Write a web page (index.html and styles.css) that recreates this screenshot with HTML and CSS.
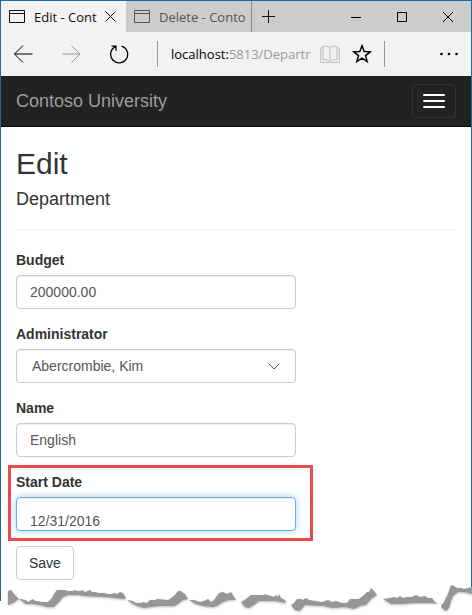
FILE: index.html
```html
<!DOCTYPE html>
<html lang="en">
<head>
<meta charset="utf-8">
<title>Edit - Contoso University</title>
<link rel="stylesheet" href="styles.css">
</head>
<body>
<div class="window">
  <header class="tabs">
    <div class="tab tab-active">
      <svg class="page-icon" width="16" height="13" viewBox="0 0 16 13"><path d="M.5.5h15v12H.5zM0 3.500h16"/></svg>
      <span class="tab-title">Edit - Cont</span>
      <button class="tab-close" aria-label="Close tab"><svg width="11" height="11" viewBox="0 0 11 11"><path d="M.5.5l10 10M10.500.5l-10 10"/></svg></button>
    </div>
    <div class="tab tab-idle">
      <svg class="page-icon" width="16" height="13" viewBox="0 0 16 13"><path d="M.5.5h15v12H.5zM0 3.500h16"/></svg>
      <span class="tab-title">Delete - Conto</span>
    </div>
    <button class="tab-new" aria-label="New tab"><svg width="13" height="13" viewBox="0 0 13 13"><path d="M6.500 0v13M0 6.500h13"/></svg></button>
    <div class="controls">
      <button aria-label="Minimize"><svg width="10" height="10" viewBox="0 0 10 10"><path d="M0 5.500h10"/></svg></button>
      <button aria-label="Maximize"><svg width="10" height="10" viewBox="0 0 10 10"><path d="M.5.5h9v9h-9z"/></svg></button>
      <button aria-label="Close"><svg width="10" height="10" viewBox="0 0 10 10"><path d="M0 0l10 10M10 0L0 10"/></svg></button>
    </div>
  </header>
  <nav class="toolbar">
    <button class="tool" aria-label="Back"><svg width="20" height="18" viewBox="0 0 20 18"><path d="M19.500 9H1.500M10 .5L1.500 9l8.500 8.500"/></svg></button>
    <button class="tool tool-off" aria-label="Forward"><svg width="20" height="18" viewBox="0 0 20 18"><path d="M1 9h18M10.500.5L19 9l-8.500 8.500"/></svg></button>
    <button class="tool" aria-label="Refresh"><svg width="20" height="20" viewBox="0 0 20 20"><path d="M12.500 2.200A8.500 8.500 0 1 1 6.500 2.700M2.500 2.200h4.500v4.500" stroke-width="1.300"/></svg></button>
    <div class="address">
      <span class="url">localhost:<span class="url-dim">5813/Departr</span></span>
      <svg class="book" width="20" height="19" viewBox="0 0 20 19"><path d="M10 16.500V2.500C8 .8 5 .8 3 1.500v13.500c2-.5 5-.5 7 1.500 2-2 5-2 7-1.500V1.500c-2-.7-5-.7-7 1M3 3H.7v14.500h18.600V3H17"/></svg>
      <svg class="star" width="20" height="20" viewBox="0 0 20 20"><path d="M10 1.800l2.200 5.700 6.100.3-4.800 3.800 1.700 6-5.200-3.400-5.200 3.400 1.700-6L1.700 7.800l6.100-.3z"/></svg>
    </div>
    <button class="more" aria-label="More"><svg width="18" height="4" viewBox="0 0 18 4"><circle cx="1.500" cy="2" r="1.300"/><circle cx="9" cy="2" r="1.300"/><circle cx="16.500" cy="2" r="1.300"/></svg></button>
  </nav>
  <div class="navbar">
    <a class="brand" href="#">Contoso University</a>
    <button class="toggle" aria-label="Toggle navigation"><span></span><span></span><span></span></button>
  </div>
  <main class="content">
    <h2>Edit</h2>
    <h4>Department</h4>
    <hr>
    <form>
      <div class="field"><label for="budget">Budget</label><input id="budget" type="text" value="200000.00"></div>
      <div class="field"><label for="admin">Administrator</label><select id="admin"><option>Abercrombie, Kim</option></select></div>
      <div class="field"><label for="name">Name</label><input id="name" type="text" value="English"></div>
      <div class="field field-marked"><label for="start">Start Date</label><input id="start" class="focused" type="text" value="12/31/2016"></div>
      <button class="save" type="button">Save</button>
    </form>
  </main>
</div>
<svg class="torn" viewBox="0 583 472 32" preserveAspectRatio="none">
  <path class="edge" d="M.5 583V601M471.500 583V589"/>
  <g class="tear">
    <path d="M8 591L11 590 15 595 19 599 22 599 24 600 26 600 28 602 31 600 33 599 35 601 38 601 41 602 48 602 52 598 54 594 57 590 65 590 67 591 73 591 75 590 77 591 80 591 82 590 85 592 90 590 92 592 96 592 98 593 105 593 107 594 112 594 114 593 117 594 120 592 123 593 126 598 124 599 115 598 105 597 85 596 78 595 68 595 63 597 59 602 54 607 47 607 40 605 33 604 26 604 19 599 13 603 8 605z"/>
    <path d="M127 600L133 601 136 603 141 603 143 602 147 603 150 600 155 600 157 599 168 600 170 599 175 595 178 591 181 591 183 593 185 594 188 599 183 600 178 604 174 606 160 606 150 607 144 608 137 606 133 604z"/>
    <path d="M189 600L194 600 197 601 200 602 204 601 208 599 211 602 214 600 217 596 219 593 223 592 227 594 231 592 234 597 236 600 229 600 223 602 217 606 213 607 203 606 196 604z"/>
    <path d="M241 602L246 599 251 595 264 595 265 594 267 595 271 596 274 597 276 595 278 597 279 594 281 598 285 600 286 603 275 601 259 601 254 605 249 608 245 607z"/>
    <path d="M291 605L294 603 297 599 301 599 303 600 306 598 309 600 322 602 325 601 328 600 332 602 336 601 342 603 347 603 350 599 359 599 364 595 367 592 369 592 371 588 374 591 377 595 372 598 366 605 360 606 354 609 345 607 332 608 324 606 305 605 300 611 295 610z"/>
    <path d="M383 599L390 598 394 597 397 598 400 596 403 598 407 597 412 597 416 595 420 597 425 596 428 598 432 598 435 602 438 604 432 603 413 603 403 604 391 604z"/>
    <path d="M441 606L444 602 446 598 448 594 450 588 451 585 454 586 457 588 461 588 464 589 468 588 472 587 472 594 464 592 458 592 453 596 451 601 449 608 446 611 442 608z"/>
  </g>
</svg>
</body>
</html>
```

FILE: styles.css
```css
* { box-sizing: border-box; }
body {
  margin: 0;
  background: #fff;
  color: #333;
  font: 14px/20px "Liberation Sans", Arial, sans-serif;
}
button { padding: 0; border: 0; background: none; font: inherit; color: inherit; }
svg { display: block; flex: none; fill: none; stroke: currentColor; }

.window { border: 1px solid #1a69a8; border-bottom: 0; }

.tabs {
  display: flex;
  height: 31px;
  background: #ccc;
  color: #111;
  font: 13px/20px "Open Sans", "Noto Sans", sans-serif;
}
.tab { display: flex; align-items: center; width: 125px; padding-left: 8px; }
.tab-active { background: #f2f2f2; }
.tab-idle { width: 126px; color: #555; border-right: 1px solid #888; }
.tab-title { margin-left: 9px; white-space: nowrap; }
.tab-close { margin-left: auto; margin-right: 10px; }
.tab-new { width: 32px; display: grid; place-items: center; }
.controls { display: flex; margin-left: auto; }
.controls button { width: 46px; display: grid; place-items: center; color: #000; }

.toolbar {
  display: flex;
  align-items: center;
  height: 44px;
  padding-left: 12px;
  background: #f2f2f2;
  color: #000;
}
.tool { width: 20px; margin-right: 28px; display: grid; place-items: center; }
.tool-off { color: #999; }
.address {
  display: flex;
  align-items: center;
  flex: 1;
  min-width: 0;
  height: 26px;
  padding: 0 12px 0 13px;
  border-left: 1px solid #999;
  border-right: 1px solid #999;
  font: 13px/20px "Open Sans", "Noto Sans", sans-serif;
}
.url { white-space: nowrap; }
.url-dim { color: #999; }
.book { margin-left: auto; color: #bbb; }
.star { margin-left: 12px; stroke-width: 1.5; }
.more { width: 86px; display: flex; justify-content: flex-end; padding-right: 13px; }
.more svg { fill: #000; stroke: none; }

.navbar {
  display: flex;
  align-items: center;
  justify-content: space-between;
  height: 51px;
  padding: 0 15px;
  background: #222;
  border-bottom: 1px solid #080808;
}
.brand { color: #9d9d9d; font-size: 18px; text-decoration: none; }
.toggle {
  display: grid;
  gap: 4px;
  padding: 9px 10px;
  width: 44px;
  height: 34px;
  border: 1px solid #333;
  border-radius: 4px;
}
.toggle span { height: 2px; background: #fff; border-radius: 1px; }

.content { padding: 20px 15px 3px; }
h2 { margin: 0 0 10px; font-size: 30px; line-height: 33px; font-weight: 400; }
h4 { margin: 0; font-size: 18px; line-height: 19px; font-weight: 400; }
hr { margin: 20px 0; border: 0; border-top: 1px solid #eee; }

.field { position: relative; max-width: 280px; margin-bottom: 15px; }
.field label { display: block; margin-bottom: 5px; font-weight: 700; }
.field input,
.field select {
  display: block;
  width: 100%;
  height: 34px;
  padding: 6px 13px;
  border: 1px solid #ccc;
  border-radius: 4px;
  background: #fff;
  box-shadow: inset 0 1px 1px rgba(0, 0, 0, .075);
  color: #555;
  font: inherit;
}
.field select {
  appearance: none;
  padding-left: 15px;
  background: #fff url("data:image/svg+xml,%3Csvg xmlns='http://www.w3.org/2000/svg' width='12' height='7'%3E%3Cpath d='M.5.5L6 6 11.500.5' fill='none' stroke='%23555'/%3E%3C/svg%3E") no-repeat right 15px center;
}
.field .focused {
  padding: 14px 13px 0;
  border-color: #66afe9;
  box-shadow: inset 0 1px 1px rgba(0, 0, 0, .075), 0 0 8px rgba(102, 175, 233, .6);
}
.field-marked::after {
  content: "";
  position: absolute;
  inset: -7px -17px -10px -8px;
  border: 3px solid #eb4b48;
  pointer-events: none;
}
.save {
  display: block;
  height: 34px;
  padding: 0 12px;
  border: 1px solid #ccc;
  border-radius: 4px;
  background: #fff;
}

.torn { width: 100%; height: 32px; }
.edge { stroke: #1a69a8; }
.tear { fill: #969696; stroke: none; filter: drop-shadow(0 1px 1px #bbb); }
```
